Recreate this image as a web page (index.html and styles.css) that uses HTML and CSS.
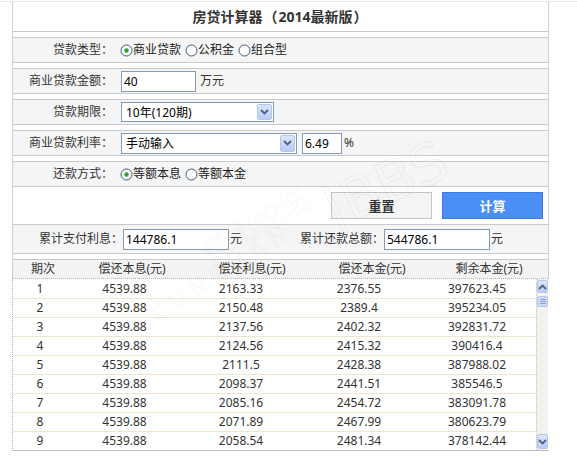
FILE: index.html
```html
<!DOCTYPE html>
<html lang="zh-CN">
<head>
<meta charset="utf-8">
<title>房贷计算器</title>
<link rel="stylesheet" href="styles.css">
</head>
<body>
<div class="page">
  <div class="calc">
    <div class="title">房贷计算器<span class="fw">（</span>2014最新版<span class="fw">）</span></div>

    <div class="row">
      <span class="label">贷款类型：</span>
      <span class="radio-group">
        <span class="radio checked"><svg width="13" height="13" viewBox="0 0 13 13"><circle cx="6.5" cy="6.5" r="5.5" fill="#fff" stroke="#3d5878"/><circle cx="6.5" cy="6.5" r="2.2" fill="#2ea32e"/></svg></span><span class="rtext">商业贷款</span>
        <span class="radio"><svg width="13" height="13" viewBox="0 0 13 13"><circle cx="6.5" cy="6.5" r="5.5" fill="#fff" stroke="#3d5878"/></svg></span><span class="rtext">公积金</span>
        <span class="radio"><svg width="13" height="13" viewBox="0 0 13 13"><circle cx="6.5" cy="6.5" r="5.5" fill="#fff" stroke="#3d5878"/></svg></span><span class="rtext">组合型</span>
      </span>
    </div>

    <div class="row">
      <span class="label">商业贷款金额：</span>
      <span class="field amount">40</span>
      <span class="unit wan">万元</span>
    </div>

    <div class="row">
      <span class="label">贷款期限：</span>
      <span class="select term"><span class="select-text">10年(120期)</span><span class="arrow"><svg width="9" height="6" viewBox="0 0 9 6"><path d="M1 1 L4.5 4.5 L8 1" fill="none" stroke="#4d6185" stroke-width="1.8"/></svg></span></span>
    </div>

    <div class="row">
      <span class="label">商业贷款利率：</span>
      <span class="select rate"><span class="select-text">手动输入</span><span class="arrow"><svg width="9" height="6" viewBox="0 0 9 6"><path d="M1 1 L4.5 4.5 L8 1" fill="none" stroke="#4d6185" stroke-width="1.8"/></svg></span></span>
      <span class="field pct">6.49</span>
      <span class="unit">%</span>
    </div>

    <div class="row">
      <span class="label">还款方式：</span>
      <span class="radio-group">
        <span class="radio checked"><svg width="13" height="13" viewBox="0 0 13 13"><circle cx="6.5" cy="6.5" r="5.5" fill="#fff" stroke="#3d5878"/><circle cx="6.5" cy="6.5" r="2.2" fill="#2ea32e"/></svg></span><span class="rtext">等额本息</span>
        <span class="radio"><svg width="13" height="13" viewBox="0 0 13 13"><circle cx="6.5" cy="6.5" r="5.5" fill="#fff" stroke="#3d5878"/></svg></span><span class="rtext">等额本金</span>
      </span>
    </div>

    <div class="buttons">
      <button class="btn reset" type="button">重置</button>
      <button class="btn calc-btn" type="button">计算</button>
    </div>

    <div class="row result">
      <span class="label rlabel1">累计支付利息：</span>
      <span class="field total">144786.1</span>
      <span class="unit yuan">元</span>
      <span class="label rlabel2">累计还款总额：</span>
      <span class="field total">544786.1</span>
      <span class="unit yuan">元</span>
    </div>

    <div class="thead">
      <span>期次</span><span>偿还本息(元)</span><span>偿还利息(元)</span><span>偿还本金(元)</span><span>剩余本金(元)</span>
    </div>

    <div class="tbody">
      <div class="rows">
        <div class="tr"><span>1</span><span>4539.88</span><span>2163.33</span><span>2376.55</span><span>397623.45</span></div>
        <div class="tr"><span>2</span><span>4539.88</span><span>2150.48</span><span>2389.4</span><span>395234.05</span></div>
        <div class="tr"><span>3</span><span>4539.88</span><span>2137.56</span><span>2402.32</span><span>392831.72</span></div>
        <div class="tr"><span>4</span><span>4539.88</span><span>2124.56</span><span>2415.32</span><span>390416.4</span></div>
        <div class="tr"><span>5</span><span>4539.88</span><span>2111.5</span><span>2428.38</span><span>387988.02</span></div>
        <div class="tr"><span>6</span><span>4539.88</span><span>2098.37</span><span>2441.51</span><span>385546.5</span></div>
        <div class="tr"><span>7</span><span>4539.88</span><span>2085.16</span><span>2454.72</span><span>383091.78</span></div>
        <div class="tr"><span>8</span><span>4539.88</span><span>2071.89</span><span>2467.99</span><span>380623.79</span></div>
        <div class="tr"><span>9</span><span>4539.88</span><span>2058.54</span><span>2481.34</span><span>378142.44</span></div>
      </div>
      <div class="scrollbar">
        <span class="sb-btn up"><svg width="9" height="6" viewBox="0 0 9 6"><path d="M1 5 L4.5 1.5 L8 5" fill="none" stroke="#4d6185" stroke-width="1.8"/></svg></span>
        <span class="sb-thumb"><span class="grip"></span><span class="grip"></span><span class="grip"></span></span>
        <span class="sb-track"></span>
        <span class="sb-btn down"><svg width="9" height="6" viewBox="0 0 9 6"><path d="M1 1 L4.5 4.5 L8 1" fill="none" stroke="#4d6185" stroke-width="1.8"/></svg></span>
      </div>
    </div>
  </div>

  <div class="watermark" aria-hidden="true">
    <span class="wm-cn">昆山论坛</span>
    <span class="wm-en">KUNSHAN</span>
    <span class="wm-bbs">|BBS</span>
  </div>
</div>
</body>
</html>
```

FILE: styles.css
```css
body {
  margin: 0;
  background: #fff;
  font-family: "Noto Sans", "Noto Sans CJK SC", sans-serif;
  font-size: 12px;
  color: #333;
}

.page {
  position: relative;
  margin-top: 1px;
  border-top: 1px solid #e8e8e8;
  height: 459px;
  overflow: hidden;
}

.calc {
  margin-left: 12px;
  width: 537px;
  box-sizing: border-box;
  border-left: 1px solid #d0d0d0;
  border-right: 1px solid #d0d0d0;
}

.title {
  height: 29px;
  line-height: 29px;
  text-align: center;
  font-size: 14px;
  font-weight: bold;
  color: #333;
  border-bottom: 1px solid #c8c8c8;
}

.fw {
  display: inline-block;
  width: 16px;
  text-align: center;
}

.row {
  margin-top: 5px;
  height: 24px;
  border-top: 1px solid #c9c9c9;
  border-bottom: 1px solid #c9c9c9;
  background: #f5f5f5;
  display: flex;
  align-items: center;
}

.label {
  flex: none;
  width: 100px;
  margin-right: 8px;
  text-align: right;
  color: #333;
  line-height: 16px;
}

.radio-group {
  display: flex;
  align-items: center;
  margin-left: -1px;
}

.radio {
  display: inline-flex;
  width: 13px;
  height: 13px;
}

.rtext {
  margin-right: 4px;
  color: #222;
  line-height: 16px;
}

.field {
  box-sizing: border-box;
  height: 21px;
  line-height: 19px;
  border: 1px solid #7f9db9;
  background: #fff;
  padding: 0 2px;
  color: #000;
}

.amount { width: 75px; }
.pct { width: 40px; margin-left: 5px; }
.total { width: 106px; }

.unit {
  margin-left: 2px;
  color: #333;
  line-height: 16px;
}
.wan { margin-left: 4px; }
.yuan { width: 13px; margin-left: 1px; }

.select {
  box-sizing: border-box;
  height: 21px;
  border: 1px solid #7f9db9;
  background: #fff;
  display: flex;
  align-items: stretch;
  padding: 1px;
}
.term { width: 153px; height: 20px; }
.rate { width: 176px; }

.select-text {
  flex: 1;
  padding-left: 3px;
  line-height: 17px;
  color: #000;
}

.arrow {
  width: 15px;
  box-sizing: border-box;
  border: 1px solid #b6c7ee;
  border-radius: 2px;
  background: linear-gradient(#dbe6fd, #b8cbf6);
  display: flex;
  align-items: center;
  justify-content: center;
}

.buttons {
  height: 37px;
  display: flex;
  justify-content: flex-end;
  align-items: center;
  gap: 10px;
  padding-right: 5px;
}

.btn {
  width: 101px;
  height: 27px;
  box-sizing: border-box;
  font-family: "Noto Sans CJK SC", sans-serif;
  font-size: 13px;
  font-weight: bold;
  padding: 0;
  cursor: pointer;
}

.reset {
  background: #f4f4f4;
  border: 1px solid #c4c4c4;
  color: #333;
}

.calc-btn {
  background: #4b8ff6;
  border: 1px solid #3b7ae0;
  color: #fff;
}

.result {
  margin-top: 0;
  height: 28px;
}

.rlabel1 { width: 110px; margin-right: 0; }
.rlabel2 { width: 141px; margin-right: 0; }

.thead {
  margin-top: 5px;
  height: 18px;
  line-height: 18px;
  border-top: 1px solid #c9c9c9;
  border-bottom: 1px dotted #b8b8b8;
  background: #f3f3f3;
  display: grid;
  grid-template-columns: 60px 118px 122px 118px 116px;
  text-align: center;
  color: #333;
}

.tbody {
  margin: 0 -1px;
  height: 171px;
  border-left: 1px dotted #b0b0b0;
  border-bottom: 1px solid #bfbfbf;
  background: #fff;
  display: flex;
  overflow: hidden;
}

.rows {
  width: 523px;
  flex: none;
  padding-top: 1px;
}

.tr {
  display: grid;
  grid-template-columns: 54px 115px 118px 118px 118px;
  height: 18px;
  line-height: 18px;
  border-bottom: 1px solid #ede5d0;
  text-align: center;
  color: #333;
}

.scrollbar {
  width: 12px;
  flex: none;
  border-left: 1px dotted #c2c2c2;
  background: #f3f2ec;
  display: flex;
  flex-direction: column;
  padding: 1px 0;
  box-sizing: border-box;
}

.sb-btn {
  box-sizing: border-box;
  border: 1px solid #b4c6ee;
  border-radius: 2px;
  background: linear-gradient(#dce6fc, #bacdf6);
  display: flex;
  align-items: center;
  justify-content: center;
}
.up { height: 13px; }
.down { height: 15px; }

.sb-thumb {
  margin-top: 3px;
  height: 11px;
  box-sizing: border-box;
  border: 1px solid #b4c6ee;
  border-radius: 2px;
  background: #cfdcfa;
  display: flex;
  flex-direction: column;
  justify-content: center;
  align-items: center;
  gap: 1px;
}

.grip {
  width: 6px;
  height: 1px;
  background: #8ea3d2;
}

.sb-track { flex: 1; }

.watermark {
  position: absolute;
  left: 0;
  top: 0;
  width: 577px;
  height: 459px;
  pointer-events: none;
  font-family: "DejaVu Sans", "Noto Sans CJK SC", sans-serif;
}

.watermark span {
  position: absolute;
  color: transparent;
  -webkit-text-stroke: 0.6px rgba(0, 0, 0, 0.08);
  white-space: nowrap;
}

.wm-cn {
  left: 195px;
  top: 200px;
  font-size: 30px;
  transform: rotate(-30deg);
}

.wm-en {
  left: 140px;
  top: 258px;
  font-size: 22px;
  letter-spacing: 8px;
  transform: rotate(-32deg);
}

.wm-bbs {
  left: 320px;
  top: 150px;
  font-size: 56px;
  transform: rotate(-25deg);
}
```
